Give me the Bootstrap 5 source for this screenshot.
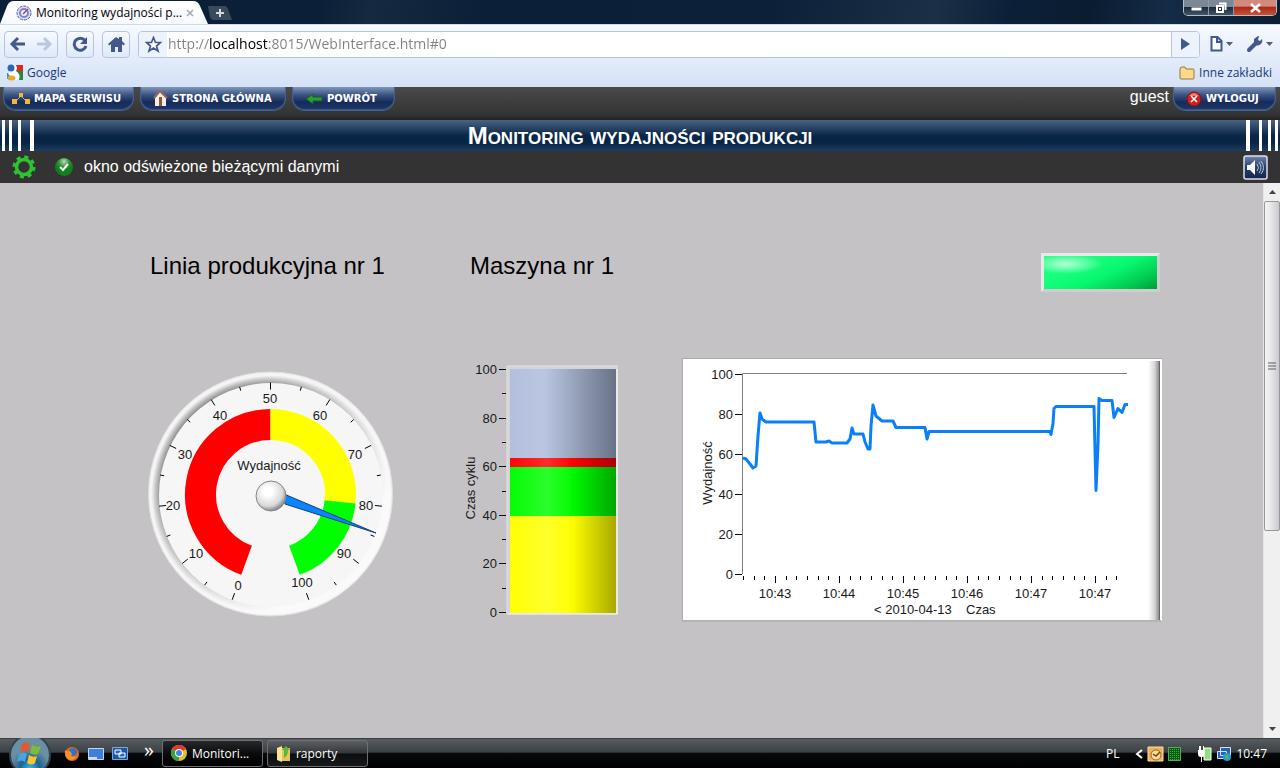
<!DOCTYPE html>
<html lang="pl">
<head>
<meta charset="utf-8">
<meta name="viewport" content="width=device-width, initial-scale=1">
<title>Monitoring wydajności produkcji</title>
<link href="https://cdn.jsdelivr.net/npm/bootstrap@5.3.0/dist/css/bootstrap.min.css" rel="stylesheet">
<style>
body{font:12px/16px "Open Sans","Noto Sans",sans-serif;background:#c5c2c5;color:#000}
button{font:inherit;color:inherit}
svg{display:block;flex:none}
.arial{font-family:"Liberation Sans",Arial,sans-serif}
/* browser window */
.titlebar{height:24px;background:linear-gradient(100deg,#0b2038 25%,#152a40 29%,#0b2038 38%,#0c2139 60%,#1b2f46 73%,#0b2038 79%,#0a1c30 85%,#142c47 91%,#0a1d33)}
.tab-front{width:208px;height:24px;padding:1px 0 0 16px;background:linear-gradient(#fff,#f6f9fe);clip-path:path("M0 24L7 6Q9 1 14 1L193 1Q198 1 200 6L208 24Z")}
.tab-text{width:146px}
.tab-plus{width:24px;height:14px;margin:6px 0 0 0;background:#3b4a5b;clip-path:path("M0 0H17Q19 0 20 3L24 14H5Q3 14 2 11Z")}
.winbtns{height:16px;margin-right:3px;border:1px solid #b5bfca;border-top:0;border-radius:0 0 5px 5px;overflow:hidden}
.winbtns button{width:25px;border-right:1px solid #8d99a8!important;background:linear-gradient(#7c8896 45%,#1c2b3c 50%,#42566b)}
.winbtns .win-close{width:42px;border:0!important;background:linear-gradient(#d08a7e 40%,#a82c19 50%,#cf4f33)}
.tools{height:37px;padding:6px 6px 4px 4px;background:linear-gradient(#f7faff,#e2ebfa);border-top:1px solid #cfd9e8}
.toolbtn{height:27px;border:1px solid #b7c4de;border-radius:4px;background:linear-gradient(#f7faff,#dfe9fa)}
.address{height:27px;border:1px solid #b7c4de;border-radius:4px;background:#fff;overflow:hidden}
.address .star{width:28px;background:#edf3fd}
.address .go{width:28px;background:#edf3fd;border-left:1px solid #b7c4de!important}
/* the host name is darker than the rest of the address */
.url-text{font-size:14px;padding:0 0 0 1px;outline:0;color:transparent;background:linear-gradient(90deg,#808080 42px,#000 42px 101px,#808080 101px);-webkit-background-clip:text;background-clip:text;caret-color:#000}
.bookmarks{height:26px;padding:0 8px 3px 6px;background:linear-gradient(#e2ebfa,#d4e1f6)}
.bookmarks a{color:#20387c;text-decoration:none}
/* application header */
.appbar{height:33px;background:linear-gradient(#4a4a4a,#333 85%,#222);padding:0 4px 0 3px}
.app-nav{gap:6px}
.pill{height:24px;border:1px solid #44648f;border-top:0;border-radius:0 0 13px 13px;background:linear-gradient(#8097b8,#3a5382 35%,#172b59 65%,#1d3766);color:#fff;font:bold 10px/24px "DejaVu Sans",sans-serif;padding:0 8px;box-shadow:inset 0 -1px 1px #3a5a88}
.pill-sm{min-width:103px}.pill-md{min-width:131px}.pill-lg{min-width:146px}
.band{height:31px;background:linear-gradient(#4a6284,#0a2747 50%,#062443 72%,#1c3d60)}
.band h1{font:bold 24px/30px "Liberation Sans",sans-serif;font-variant:small-caps;color:#fff}
.stripes{width:34px;align-self:stretch;background:linear-gradient(90deg,transparent 2px,#fff 2px 5px,transparent 5px 9px,#fff 9px 12px,transparent 12px 18px,#fff 18px 21px,transparent 21px 30px,#fff 30px 34px)}
.stripes-end{transform:scaleX(-1)}
.statusbar{height:32px;background:#333;color:#fff;font-size:16px;padding:0 12px}
/* dashboard */
.board{padding:69px 101px 0 147px}
.board-grid{display:grid;grid-template-columns:313fr 222fr 480fr}
.board h2{font:24px/28px "Liberation Sans",sans-serif;padding-left:3px}
.board h2.machine{padding-left:10px}
.lamp{width:119px;height:39px;margin:1px 2px 0 auto;border:3px solid #cfcdcf;border-top-color:#e9e8e9;border-left-color:#e9e8e9;background:radial-gradient(ellipse 38px 10px at 19% 24%,#b4ffd6,transparent),linear-gradient(155deg,#1aff80 25%,#08f76f 55%,#00c94f 82%,#009c3a)}
.charts{margin-top:66px}
.dial{margin-top:13px}
svg text{font:13px "Liberation Sans",sans-serif;fill:#1a1a1a}
.scroller{width:17px;background:#f1f0f1;border-left:1px solid #e4e3e5}
.scroller button{height:18px}
.thumb{height:330px;border:1px solid #979797;border-radius:2px;background:linear-gradient(90deg,#f5f5f5,#e6e6e8 45%,#c9cace)}
/* taskbar */
.taskbar{height:30px;color:#fff;background:linear-gradient(#555b60,#3c4145 45%,#07090b 50%,#000);border-top:1px solid #3c3f42;padding-right:13px}
.taskbtn{width:101px;height:27px;border:1px solid #6d7073;border-radius:3px;background:linear-gradient(#5c6064,#33373b 48%,#0b0d0f 52%,#17191b);padding-left:8px}
.taskbtn.on{background:linear-gradient(#26292c,#0a0b0c 50%,#000)}
</style>
</head>
<body class="d-flex flex-column min-vh-100 overflow-hidden">

<header>
  <div class="titlebar d-flex align-items-start">
    <div class="tab-front d-flex align-items-center">
      <svg width="16" height="16"><circle cx="8" cy="8" r="7" fill="#d8dcf0" stroke="#56618c" stroke-dasharray="3 1"/><circle cx="8" cy="8" r="4" fill="#eef" stroke="#7a86d4" stroke-width="2"/><path d="M7 9l5-5" stroke="#a0486c" stroke-width="1.5"/></svg>
      <span class="tab-text ps-1 text-nowrap">Monitoring wydajności p...</span>
      <button class="btn p-0 border-0 ms-2" aria-label="Zamknij kartę"><svg width="8" height="8"><path d="M1 1l6 6M7 1l-6 6" stroke="#a3a9b2" stroke-width="1.5"/></svg></button>
    </div>
    <button class="tab-plus border-0 p-0 d-flex justify-content-center align-items-center" aria-label="Nowa karta"><svg width="8" height="8"><path d="M4 0v8M0 4h8" stroke="#d2d8df" stroke-width="2"/></svg></button>
    <div class="winbtns d-flex ms-auto">
      <button class="border-0 p-0 d-flex justify-content-center align-items-end pb-1" aria-label="Minimalizuj"><svg width="11" height="4"><path d="M0 0h11v4H0z" fill="#fff" stroke="#334"/></svg></button>
      <button class="border-0 p-0 d-flex justify-content-center align-items-center" aria-label="Przywróć"><svg width="12" height="12"><path d="M4 1.500h6.500V8" fill="none" stroke="#fff" stroke-width="2"/><path d="M2 4h6v6H2z" fill="#334" stroke="#fff" stroke-width="2"/><path d="M4 6h2v2H4z" fill="#fff"/></svg></button>
      <button class="win-close p-0 d-flex justify-content-center align-items-center" aria-label="Zamknij"><svg width="11" height="10"><path d="M1 1l9 8M10 1l-9 8" stroke="#fff" stroke-width="2.500"/></svg></button>
    </div>
  </div>

  <div class="tools d-flex align-items-center">
    <div class="toolbtn d-flex">
      <button class="btn p-0 border-0 px-1" aria-label="Wstecz"><svg width="18" height="16"><path d="M9 2L3 8l6 6M3 8h13" fill="none" stroke="#42598d" stroke-width="3"/></svg></button>
      <button class="btn p-0 border-0 px-1" aria-label="Dalej"><svg width="18" height="16"><path d="M9 2l6 6-6 6M15 8H2" fill="none" stroke="#b9c7e0" stroke-width="3"/></svg></button>
    </div>
    <button class="toolbtn ms-2 px-1" aria-label="Odśwież"><svg width="18" height="16"><path d="M14 4.500A6 6 0 1 0 15 10" fill="none" stroke="#42598d" stroke-width="3"/><path d="M16 1v7H9z" fill="#42598d"/></svg></button>
    <button class="toolbtn ms-2 px-1" aria-label="Strona startowa"><svg width="18" height="16"><path d="M9 1L1 8l1.500 1.500L4 8v8h4v-5h3v5h4V8l1.500 1.500L18 8l-3-3V1h-3v2z" fill="#42598d"/></svg></button>
    <div class="address d-flex flex-grow-1 ms-2">
      <button class="star border-0 p-0 d-flex justify-content-center align-items-center" aria-label="Dodaj zakładkę"><svg width="17" height="17"><path d="M8.500 1.500l2 5h5l-4 3.500 1.500 5-4.500-3-4.500 3 1.500-5-4-3.500h5z" fill="#fff" stroke="#42598d" stroke-width="1.700"/></svg></button>
      <input class="url-text flex-grow-1 border-0" type="text" aria-label="Adres" value="http://localhost:8015/WebInterface.html#0">
      <button class="go border-0 p-0 d-flex justify-content-center align-items-center" aria-label="Przejdź"><svg width="9" height="12"><path d="M0 0l9 6-9 6z" fill="#42598d"/></svg></button>
    </div>
    <button class="btn p-0 border-0 d-flex align-items-center ms-2" aria-label="Strona"><svg width="26" height="18"><path d="M3.500 2h6l4 4v9.500h-10zM9 2v5h5" fill="#fff" stroke="#42598d" stroke-width="2"/><path d="M18 7h7l-3.500 4z" fill="#555e70"/></svg></button>
    <button class="btn p-0 border-0 d-flex align-items-center ms-2 ps-1" aria-label="Narzędzia"><svg width="28" height="18"><path d="M3 15l7-7" stroke="#42598d" stroke-width="4" stroke-linecap="round"/><path d="M8 8V4l4-3 1 0-1 4 2 1 2-2a5 5 0 0 1-7 6z" fill="#42598d"/><path d="M20 7h7l-3.500 4z" fill="#555e70"/></svg></button>
  </div>

  <nav class="bookmarks d-flex align-items-center justify-content-between">
    <a href="#" class="d-flex align-items-center"><svg width="17" height="17"><path d="M8 1h9v6H8z" fill="#d92b24"/><path d="M9 7h8v9H9z" fill="#24893c"/><path d="M1 9h4v6H1z" fill="#2b8fd0"/><path d="M8 0q5 3 2 7 5 3 3 9H9L2 10z" fill="#fff"/><ellipse cx="5" cy="4" rx="3.500" ry="3.500" fill="#2b63c4"/><ellipse cx="5.500" cy="14" rx="4" ry="2.500" fill="#eea52c"/></svg><span class="ms-1">Google</span></a>
    <a href="#" class="d-flex align-items-center"><svg width="16" height="14"><path d="M1 3q0-2 2-2h3l1 2h7q1 0 1 1v8q0 1-1 1H2q-1 0-1-1z" fill="#fbd98b" stroke="#9c763a"/></svg><span class="ms-1">Inne zakładki</span></a>
  </nav>
</header>

<div class="appbar d-flex justify-content-between">
  <nav class="app-nav d-flex">
    <button class="pill pill-md d-flex align-items-center"><svg class="me-1" width="18" height="14"><path d="M4 9L9 4l5 5" fill="none" stroke="#9fa8b8"/><path d="M7 1h4v4H7zM0 7h5v5H0zM13 7h5v5h-5z" fill="#f1b834"/></svg>MAPA SERWISU</button>
    <button class="pill pill-lg d-flex align-items-center"><svg class="ms-1 me-1" width="15" height="17"><path d="M2 8l5-6 6 6v8H2z" fill="#f4ede8"/><path d="M1 8l6-7 7 7" fill="none" stroke="#9a6a50" stroke-width="2"/><path d="M6 7h3v9H6z" fill="#8f5a38"/></svg>STRONA GŁÓWNA</button>
    <button class="pill pill-sm d-flex align-items-center"><svg class="ms-1 me-1" width="18" height="12"><path d="M1 6l7-5v3h9v4H8v3z" fill="#2d9c34" stroke="#165c2c"/></svg>POWRÓT</button>
  </nav>
  <div class="d-flex">
    <span class="arial text-white fs-6 pe-1 lh-sm">guest</span>
    <button class="pill pill-sm d-flex align-items-center"><svg class="ms-1 me-1" width="16" height="16"><circle cx="8" cy="8" r="7" fill="#cf1f1f" stroke="#8a0f18"/><path d="M3 5q5-6 10 0z" fill="#ee7b74"/><path d="M5 5l6 6M11 5l-6 6" stroke="#fff" stroke-width="1.500"/></svg>WYLOGUJ</button>
  </div>
</div>

<div class="band d-flex align-items-center justify-content-between">
  <div class="stripes"></div>
  <h1 class="m-0">Monitoring wydajności produkcji</h1>
  <div class="stripes stripes-end"></div>
</div>

<div class="statusbar arial d-flex align-items-center">
  <svg width="24" height="24"><circle cx="12" cy="12" r="10" fill="none" stroke="#2fc42f" stroke-width="3" stroke-dasharray="4 3.850"/><circle cx="12" cy="12" r="7.500" fill="none" stroke="#2fc42f" stroke-width="3.500"/></svg>
  <svg class="ms-3" width="24" height="24"><defs><radialGradient id="ok" cy=".2"><stop offset="0" stop-color="#b8dcb8"/><stop offset=".6" stop-color="#2f8f35"/><stop offset="1" stop-color="#11801a"/></radialGradient></defs><circle cx="12" cy="12" r="9" fill="url(#ok)"/><path d="M8 12l3 3 5-6" fill="none" stroke="#fff" stroke-width="2"/></svg>
  <span class="ms-2">okno odświeżone bieżącymi danymi</span>
  <button class="btn p-0 border-0 ms-auto" aria-label="Dźwięk"><svg width="25" height="25"><defs><linearGradient id="snd" x2="0" y2="1"><stop stop-color="#7188ae"/><stop offset=".5" stop-color="#243d6c"/><stop offset="1" stop-color="#15264f"/></linearGradient></defs><rect x="1" y="1" width="23" height="23" rx="2" fill="url(#snd)" stroke="#dde2ea" stroke-width="1.500"/><path d="M4 10h3l5-5v15l-5-5H4z" fill="#fff"/><path d="M14 9q3 4 0 7M16 7q4 6 0 11M18 6q5 7 0 13" fill="none" stroke="#b9c7dd"/></svg></button>
</div>

<div class="d-flex flex-grow-1">
  <main class="board flex-grow-1">
    <div class="board-grid">
      <h2 class="m-0">Linia produkcyjna nr 1</h2>
      <h2 class="machine m-0">Maszyna nr 1</h2>
      <div class="lamp"></div>
    </div>
    <div class="board-grid charts">
      <svg class="dial" width="247" height="247" viewBox="147 372 247 247" role="img" aria-label="Wydajność">
        <defs>
          <radialGradient id="groove"><stop offset=".93" stop-color="#7c7c7c"/><stop offset=".97" stop-color="#bdbdbd"/><stop offset="1" stop-color="#f4f4f4"/></radialGradient>
          <linearGradient id="rim" x1=".12" y1=".12" x2=".75" y2=".75"><stop stop-color="#f8f8f8" stop-opacity="0"/><stop offset=".4" stop-color="#f8f8f8" stop-opacity=".4"/><stop offset="1" stop-color="#fafafa"/></linearGradient>
          <radialGradient id="hub" cx=".4" cy=".35" r=".7"><stop offset=".2" stop-color="#fff"/><stop offset=".7" stop-color="#d8d8d8"/><stop offset="1" stop-color="#6f6f6f"/></radialGradient>
        </defs>
        <circle cx="270.500" cy="495" r="122" fill="#f4f4f4" stroke="#dedede"/>
        <circle cx="270.500" cy="495.500" r="119" fill="url(#groove)"/>
        <circle cx="270.500" cy="495.500" r="120" fill="url(#rim)"/>
        <circle cx="271" cy="496" r="112" fill="#f6f6f6"/>
        <g id="zones" fill="none" stroke-width="31"></g>
        <g id="gaugeTicks" stroke="#000"></g>
        <g id="gaugeLabels" text-anchor="middle"></g>
        <text x="269" y="471" text-anchor="middle">Wydajność</text>
        <path d="M284 495L376 534l-91-29z" fill="#0a84ff" stroke="#123f78"/>
        <circle cx="271" cy="497" r="15" fill="url(#hub)" stroke="#868686"/>
      </svg>
      <svg width="165" height="264" viewBox="460 359 165 264" role="img" aria-label="Czas cyklu">
        <defs><linearGradient id="shade"><stop stop-color="#fff" stop-opacity=".02"/><stop offset=".35" stop-color="#fff" stop-opacity=".17"/><stop offset=".55" stop-color="#fff" stop-opacity=".04"/><stop offset=".6" stop-color="#000" stop-opacity=".02"/><stop offset="1" stop-color="#000" stop-opacity=".34"/></linearGradient>
        <linearGradient id="tank"><stop stop-color="#b4bfde"/><stop offset=".33" stop-color="#bac6e1"/><stop offset="1" stop-color="#687287"/></linearGradient></defs>
        <path d="M507 367h111v248H507z" fill="#d5d4d5"/><path d="M507 616V367h111" fill="none" stroke="#e2e2e2"/><path d="M617 370v245H508" fill="none" stroke="#fff"/>
        <path d="M510 370h106v89H510z" fill="url(#tank)"/>
        <path d="M510 459h106v9H510z" fill="#fe0000"/><path d="M510 468h106v49H510z" fill="#00fc00"/><path d="M510 517h106v97H510z" fill="#ff0"/>
        <path d="M510 459h106v155H510z" fill="url(#shade)"/>
        <g id="barTicks" stroke="#000"></g><g id="barLabels" text-anchor="end"></g>
        <text transform="translate(475 489) rotate(-90)" text-anchor="middle">Czas cyklu</text>
      </svg>
      <svg class="w-100" viewBox="682 359 480 264" role="img" aria-label="Wydajność w czasie">
        <defs><linearGradient id="edge"><stop stop-color="#fff"/><stop offset=".6" stop-color="#d6d6d6"/><stop offset="1" stop-color="#8c8c8c"/></linearGradient></defs>
        <path d="M682 359h480v264H682z" fill="#fff"/><path d="M682.500 359v263.500M682 359.500h480" stroke="#adabad"/><path d="M683 621.500h478M682 622.500h480" stroke="#b4b4b4"/>
        <path d="M1148 362h11v259h-11z" fill="url(#edge)"/><path d="M1159.500 362v259" stroke="#666"/>
        <path d="M742.500 575V374.500H1127" fill="none" stroke="#808080"/>
        <g id="trendTicks" stroke="#000"></g><g id="trendY" text-anchor="end"></g><g id="trendX" text-anchor="middle"></g>
        <text transform="translate(712 474) rotate(-90)" text-anchor="middle">Wydajność</text>
        <text x="874" y="615">&lt; 2010-04-13</text><text x="966" y="615">Czas</text>
        <path d="M743 459l3 1 4 5 3 4 3-2 2-30 2-23 2 6 4 3h48l2 20h10l3-1 3 2h15l3-4 2-11 2 6h9l2 8 3 7h2l1-23 2-21 3 11 6 5h11l3 6.500h29l2 11.500 2-7.500h121l1 3 2-11 1-15 2-2h38l2 84 2-46 1-46 3 2h10l2 17 4-9 4 4 3-8h3" fill="none" stroke="#0a80f8" stroke-width="3" stroke-linejoin="round"/>
      </svg>
    </div>
  </main>
  <aside class="scroller d-flex flex-column">
    <button class="btn p-0 border-0 d-flex justify-content-center align-items-center" aria-label="W górę"><svg width="7" height="4"><path d="M0 4l3.500-4L7 4z" fill="#444"/></svg></button>
    <div class="thumb d-flex align-items-center justify-content-center"><svg width="8" height="8"><path d="M0 1h8M0 4h8M0 7h8" stroke="#606060"/></svg></div>
    <button class="btn p-0 border-0 d-flex justify-content-center align-items-center mt-auto" aria-label="W dół"><svg width="7" height="4"><path d="M0 0h7L3.500 4z" fill="#444"/></svg></button>
  </aside>
</div>

<footer class="taskbar d-flex align-items-center">
  <button class="btn p-0 border-0 ms-2 overflow-hidden align-self-end" aria-label="Start"><svg width="44" height="30"><defs><radialGradient id="orb" cy=".85"><stop stop-color="#37bdf3"/><stop offset=".5" stop-color="#1d628f"/><stop offset="1" stop-color="#6a8ea2"/></radialGradient></defs><circle cx="22" cy="17" r="20" fill="url(#orb)" stroke="#30444f" stroke-width="2"/><path d="M14 6q4-3 8 0l-2 8q-4-3-8 0z" fill="#e8562a"/><path d="M24 7q5 3 9 1l-3 8q-4 2-8-1z" fill="#7dbb3c"/><path d="M11 16q4-3 8 0l-2 8q-4-3-8 0z" fill="#4aa3e0"/><path d="M21 17q4 3 8 1l-2 7q-4 3-8 0z" fill="#fbc52f"/></svg></button>
  <div class="d-flex align-items-center ms-2 gap-2 ps-1">
    <svg width="16" height="16"><circle cx="8" cy="8" r="7" fill="#e46a1c"/><circle cx="9" cy="6" r="4" fill="#3b6fc4"/><path d="M1 4q2 2 5 1l2 3q-3 4 5 2-4 6-9 3-4-4-3-9z" fill="#f6932a"/></svg>
    <svg width="16" height="14"><path d="M.5 1.500h15v11H.500z" fill="#3f7fdc" stroke="#c4d6ee"/><path d="M1 11h8" stroke="#d5dbe2" stroke-width="2"/></svg>
    <svg width="16" height="14"><path d="M.5.500h15v12H.500z" fill="#1b57a8" stroke="#7fa5d4"/><path d="M3 3h6v4H3zM7 6h6v4H7z" fill="#2a66b8" stroke="#fff"/></svg>
  </div>
  <span class="ms-3 fs-5 pb-2">»</span>
  <button class="taskbtn on d-flex align-items-center ms-2"><svg width="17" height="17"><circle cx="8" cy="8" r="8" fill="#e2c22c"/><path d="M8 8L1 4A8 8 0 0 1 15 4z" fill="#dc3a2c"/><path d="M8 8l0 8A8 8 0 0 1 1 4z" fill="#36a047"/><circle cx="8" cy="8" r="4" fill="#fff"/><circle cx="8" cy="8" r="3" fill="#3f86dc"/></svg><span class="ms-1">Monitori...</span></button>
  <button class="taskbtn d-flex align-items-center ms-1"><svg width="16" height="18"><path d="M1 3l5-2v16l-5-2z" fill="#f6e69c"/><path d="M6 3h8v13H6z" fill="#e6c55c"/><path d="M8 9V5h-2l4-4 4 4h-2q0 6-4 8z" fill="#56b83c"/></svg><span class="ms-1">raporty</span></button>
  <div class="d-flex align-items-center ms-auto">
    <span class="me-3">PL</span>
    <svg width="8" height="10"><path d="M7 1L2 5l5 4" fill="none" stroke="#fff" stroke-width="2"/></svg>
    <svg class="ms-1" width="17" height="16"><path d="M1 1h15v14H1z" fill="#f0b054" stroke="#f8dfb0"/><circle cx="9" cy="9" r="5" fill="#fae0a4" stroke="#a86518"/><path d="M6 8l3 2 4-4" fill="none" stroke="#6e430e" stroke-width="1.500"/></svg>
    <svg class="ms-1" width="13" height="14"><defs><pattern id="dots" width="2" height="2" patternUnits="userSpaceOnUse"><path d="M0 0h2v2H0z" fill="#0a5a12"/><path d="M0 0h1v1H0z" fill="#27b836"/></pattern></defs><path d="M.5.500h12v13H.500z" fill="url(#dots)" stroke="#5aa862"/></svg>
    <svg class="ms-3" width="15" height="16"><path d="M7 2h7v12H7z" fill="#8fe07c" stroke="#fff"/><path d="M1 4h7v4q0 3-3 3v5H4v-5q-3 0-3-3zM2 0h2v4H2zM6 0h1v4H6z" fill="#fff"/></svg>
    <svg class="ms-1" width="16" height="16"><path d="M4.500 1.500h10v8h-10zM1.500 5.500h9v7h-9z" fill="#2463b8" stroke="#d3e3f4"/><circle cx="11" cy="11" r="4" fill="#269bd0"/><path d="M9 9l4 1-2 4z" fill="#59b847"/></svg>
    <time class="ms-1">10:47</time>
  </div>
</footer>

<script src="https://cdn.jsdelivr.net/npm/bootstrap@5.3.0/dist/js/bootstrap.bundle.min.js"></script>
<script>
const $ = id => document.getElementById(id);
const line = (x1, y1, x2, y2) => `<line x1="${x1}" y1="${y1}" x2="${x2}" y2="${y2}"/>`;
const label = (x, y, t) => `<text x="${x}" y="${y}">${t}</text>`;

// dial: 0..100 spans 320 degrees, 50 at the top
const at = (v, r) => {
  const a = (v - 50) * 3.2 * Math.PI / 180;
  return [270.5 + r * Math.sin(a), 495.5 - r * Math.cos(a)];
};
$('zones').innerHTML = [[0, 50, '#f00'], [50, 80, '#ff0'], [80, 100, '#0f0']].map(([a, b, c]) =>
  `<path stroke="${c}" d="M${at(a, 70)}A70 70 0 0 1 ${at(b, 70)}"/>`).join('');
let s = '';
for (let v = 0; v <= 100; v += 5) s += line(...at(v, v % 10 ? 108 : 105), ...at(v, 112));
$('gaugeTicks').innerHTML = s;
$('gaugeLabels').innerHTML = [[238,591],[196,559],[173,511],[185,460],[220,421],[270,404],[320,421],[355,460],[366,511],[344,559],[302,588]]
  .map(([x, y], i) => label(x, y, i * 10)).join('');

// level bar
s = ''; let t = '';
for (let v = 0; v <= 100; v += 10) {
  const y = Math.round(613 - v * 2.43) + .5;
  s += line(v % 20 ? 502 : 499, y, 506, y);
  if (v % 20 === 0) t += label(497, y + 4.5, v);
}
$('barTicks').innerHTML = s; $('barLabels').innerHTML = t;

// trend axes
s = ''; t = '';
for (let v = 0; v <= 100; v += 20) {
  const y = 575.5 - v * 2;
  s += line(735, y, 742, y);
  t += label(733, y + 4.5, v);
}
for (let i = -3; i <= 32; i++) {
  const x = Math.round(775 + i * 64 / 6) + .5;
  s += line(x, 577, x, i % 6 ? 581 : 584);
}
$('trendTicks').innerHTML = s; $('trendY').innerHTML = t;
$('trendX').innerHTML = ['10:43','10:44','10:45','10:46','10:47','10:47'].map((h, i) => label(775 + i * 64, 599, h)).join('');
</script>
</body>
</html>
